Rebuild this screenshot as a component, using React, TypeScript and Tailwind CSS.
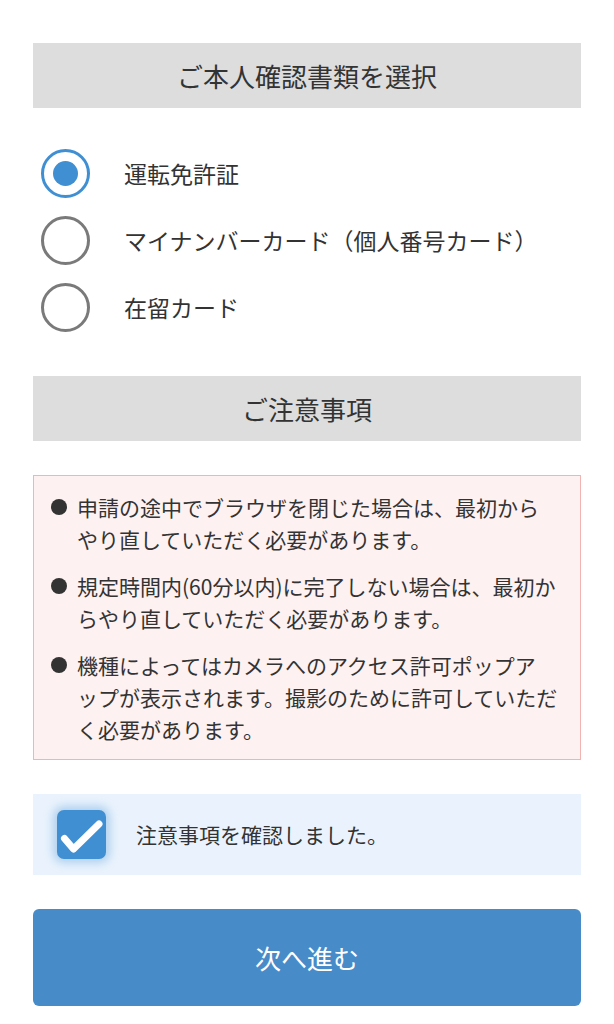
import React from "react";

const font = { fontFamily: '"Noto Sans CJK JP", "Noto Sans", sans-serif' };

function Radio({ checked, label }: { checked?: boolean; label: string }) {
  return (
    <div className="flex items-center h-[67px] pl-[8px]">
      <div
        className={
          "w-[49px] h-[49px] rounded-full flex items-center justify-center shrink-0 border-[3px] " +
          (checked ? "border-[#3f8fd2]" : "border-[#7a7a7a]")
        }
      >
        {checked && <div className="w-[25px] h-[25px] rounded-full bg-[#3f8fd2]" />}
      </div>
      <span className="ml-[34px] text-[23px] leading-none text-[#333] whitespace-nowrap">{label}</span>
    </div>
  );
}

function Bullet({ lines }: { lines: string[] }) {
  return (
    <div className="flex">
      <div className="h-[32px] flex items-center shrink-0">
        <div className="w-[16px] h-[16px] rounded-full bg-[#333]" />
      </div>
      <div className="ml-[10px] text-[21px] leading-[32px] text-[#333]">
        {lines.map((l, i) => (
          <div key={i} className="whitespace-nowrap">
            {l}
          </div>
        ))}
      </div>
    </div>
  );
}

export default function App() {
  return (
    <div className="w-[614px] h-[1024px] bg-white overflow-hidden" style={font}>
      <div className="mx-[33px] pt-[43px] flex flex-col">
        <div className="h-[65px] bg-[#dddddd] flex items-center justify-center text-[26px] text-[#333]">
          ご本人確認書類を選択
        </div>
        <div className="mt-[32px] flex flex-col">
          <Radio checked label="運転免許証" />
          <Radio label="マイナンバーカード（個人番号カード）" />
          <Radio label="在留カード" />
        </div>
        <div className="mt-[35px] h-[65px] bg-[#dddddd] flex items-center justify-center text-[26px] text-[#333]">
          ご注意事項
        </div>
        <div className="mt-[34px] h-[285px] border border-[#f2b3b3] bg-[#fdf1f1] pt-[15px] pl-[17px] flex flex-col gap-[15px]">
          <Bullet lines={["申請の途中でブラウザを閉じた場合は、最初から", "やり直していただく必要があります。"]} />
          <Bullet lines={["規定時間内(60分以内)に完了しない場合は、最初か", "らやり直していただく必要があります。"]} />
          <Bullet
            lines={[
              "機種によってはカメラへのアクセス許可ポップア",
              "ップが表示されます。撮影のために許可していただ",
              "く必要があります。",
            ]}
          />
        </div>
        <div className="mt-[34px] h-[81px] bg-[#eaf3fd] flex items-center pl-[24px]">
          <div className="w-[49px] h-[49px] rounded-[7px] bg-[#3f8fd2] shadow-[0_0_10px_4px_rgba(63,143,210,0.35)] shrink-0">
            <svg width="49" height="49" viewBox="0 0 49 49" fill="none">
              <path d="M7.5 28.5 L16.5 39 L42 14" stroke="white" strokeWidth="7" strokeLinecap="round" strokeLinejoin="round" />
            </svg>
          </div>
          <span className="ml-[30px] text-[21px] text-[#333] leading-none">注意事項を確認しました。</span>
        </div>
        <button className="mt-[34px] h-[97px] rounded-[6px] bg-[#478bc9] text-white text-[26px] flex items-center justify-center">
          次へ進む
        </button>
      </div>
    </div>
  );
}
